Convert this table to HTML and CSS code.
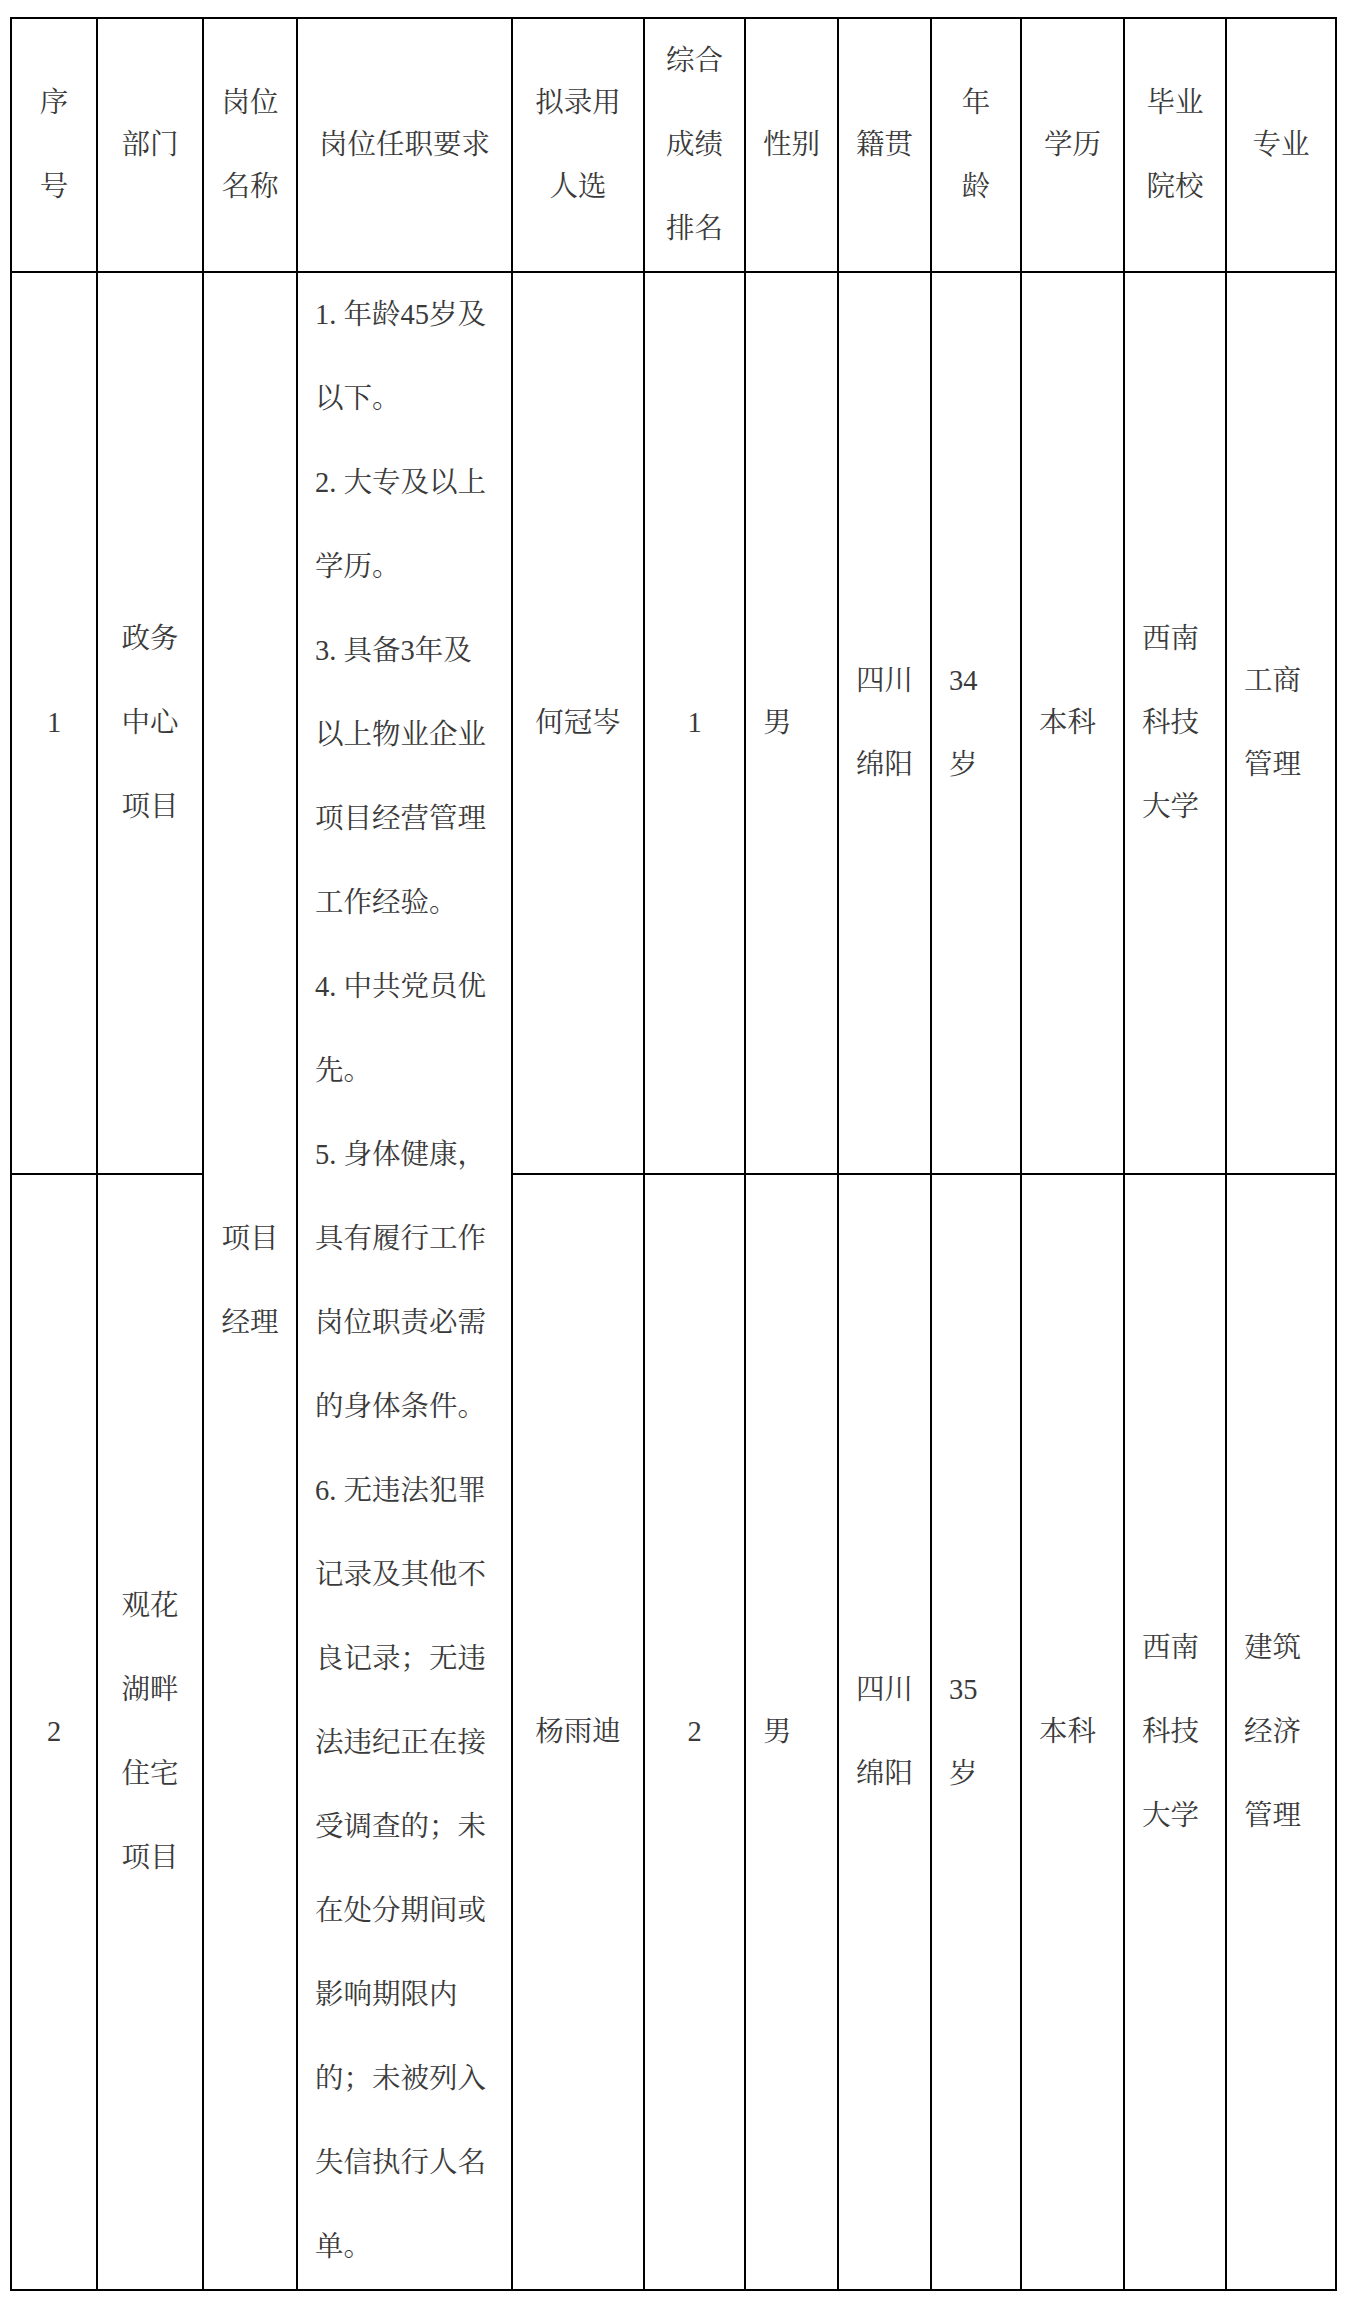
FILE: index.html
```html
<!DOCTYPE html>
<html lang="zh-CN">
<head>
<meta charset="utf-8">
<title>拟录用人选</title>
<link rel="stylesheet" href="styles.css">
</head>
<body>
<div class="page">
<table class="roster">
  <colgroup>
    <col class="w-no"><col class="w-dept"><col class="w-post"><col class="w-req"><col class="w-name"><col class="w-rank">
    <col class="w-sex"><col class="w-home"><col class="w-age"><col class="w-edu"><col class="w-school"><col class="w-major">
  </colgroup>
  <thead>
    <tr>
      <th>序<br>号</th>
      <th>部门</th>
      <th>岗位<br>名称</th>
      <th>岗位任职要求</th>
      <th>拟录用<br>人选</th>
      <th>综合<br>成绩<br>排名</th>
      <th>性别</th>
      <th>籍贯</th>
      <th>年<br>龄</th>
      <th>学历</th>
      <th>毕业<br>院校</th>
      <th>专业</th>
    </tr>
  </thead>
  <tbody>
    <tr class="row-a">
      <td class="mid">1</td>
      <td class="mid">政务<br>中心<br>项目</td>
      <td class="mid" rowspan="2">项目<br>经理</td>
      <td class="req" rowspan="2"><span class="idx">1.</span>年龄45岁及<br>以下。<br><span class="idx">2.</span>大专及以上<br>学历。<br><span class="idx">3.</span>具备3年及<br>以上物业企业<br>项目经营管理<br>工作经验。<br><span class="idx">4.</span>中共党员优<br>先。<br><span class="idx">5.</span>身体健康，<br>具有履行工作<br>岗位职责必需<br>的身体条件。<br><span class="idx">6.</span>无违法犯罪<br>记录及其他不<br>良记录；无违<br>法违纪正在接<br>受调查的；未<br>在处分期间或<br>影响期限内<br>的；未被列入<br>失信执行人名<br>单。</td>
      <td class="mid">何冠岑</td>
      <td class="mid">1</td>
      <td class="lft">男</td>
      <td class="lft">四川<br>绵阳</td>
      <td class="lft">34<br>岁</td>
      <td class="lft">本科</td>
      <td class="lft">西南<br>科技<br>大学</td>
      <td class="lft">工商<br>管理</td>
    </tr>
    <tr class="row-b">
      <td class="mid">2</td>
      <td class="mid">观花<br>湖畔<br>住宅<br>项目</td>
      <td class="mid">杨雨迪</td>
      <td class="mid">2</td>
      <td class="lft">男</td>
      <td class="lft">四川<br>绵阳</td>
      <td class="lft">35<br>岁</td>
      <td class="lft">本科</td>
      <td class="lft">西南<br>科技<br>大学</td>
      <td class="lft">建筑<br>经济<br>管理</td>
    </tr>
  </tbody>
</table>
</div>
</body>
</html>
```

FILE: styles.css
```css
html, body {
  margin: 0;
  padding: 0;
  background: #ffffff;
}

.page {
  padding: 17px 0 0 10px;
}

.roster {
  border-collapse: collapse;
  table-layout: fixed;
  width: 1327px;
  font-family: "Liberation Serif", "Noto Serif CJK SC", "Noto Sans CJK SC", serif;
  font-size: 28.5px;
  line-height: 84px;
  color: #3a3a3a;
}

.w-no { width: 86px; }
.w-dept { width: 106px; }
.w-post { width: 94px; }
.w-req { width: 215px; }
.w-name { width: 132px; }
.w-rank { width: 101px; }
.w-sex { width: 93px; }
.w-home { width: 93px; }
.w-age { width: 90px; }
.w-edu { width: 103px; }
.w-school { width: 102px; }
.w-major { width: 110px; }

.roster th,
.roster td {
  border: 2px solid #000000;
  padding: 0;
  vertical-align: middle;
  white-space: nowrap;
}

.roster th {
  font-weight: normal;
  text-align: center;
}

.roster td.mid {
  text-align: center;
}

.roster td.lft,
.roster td.req {
  text-align: left;
  padding-left: 17px;
}

.idx {
  margin-right: 0.25em;
}

.row-a { height: 902px; }
.row-b { height: 1116px; }
```
